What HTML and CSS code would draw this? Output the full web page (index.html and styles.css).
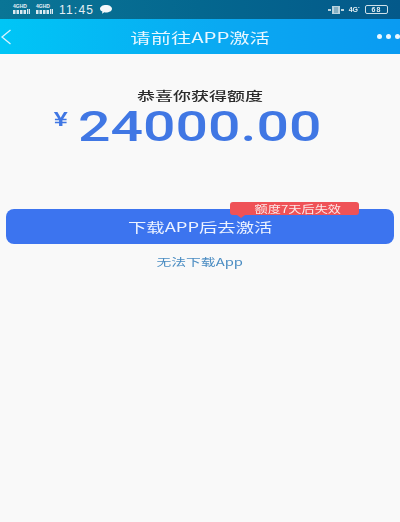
FILE: index.html
```html
<!DOCTYPE html>
<html lang="zh">
<head>
<meta charset="utf-8">
<title>请前往APP激活</title>
<link rel="stylesheet" href="styles.css">
</head>
<body>
<div class="page">
<div class="statusbar">
  <div class="status-left">
    <span class="sig"><span class="sig-t">4GHD</span><svg width="17" height="6" viewBox="0 0 17 6"><path d="M0 1h2.500v4H0zM3.500 1H6v4H3.500zM7 1h2.500v4H7zM10.500 1H13v4h-2.500zM14 0h1.200v5H14zM15.800 0H17v5h-1.200z" fill="#dbe9f0"/></svg></span>
    <span class="sig"><span class="sig-t">4GHD</span><svg width="17" height="6" viewBox="0 0 17 6"><path d="M0 1h2.500v4H0zM3.500 1H6v4H3.500zM7 1h2.500v4H7zM10.500 1H13v4h-2.500zM14 0h1.200v5H14zM15.800 0H17v5h-1.200z" fill="#dbe9f0"/></svg></span>
    <span class="time">11:45</span>
    <svg class="bubble" width="12" height="9" viewBox="0 0 12 9"><path d="M6 0c3.300 0 6 1.600 6 3.800S9.300 7.500 6 7.500c-.6 0-1.200 0-1.700-.2L2 8.800l.4-2.200C.9 6 0 5 0 3.800 0 1.600 2.700 0 6 0z" fill="#f4f8fa"/></svg>
  </div>
  <div class="status-right">
    <svg width="16" height="10" viewBox="0 0 16 10"><path d="M4 1h8v8H4zM0 4h3v2H0zM13 4h3v2h-3z" fill="#b9d2dd"/><path d="M6 3h4M6 5h4M6 7h4" stroke="#27708f" stroke-width=".7"/></svg>
    <span class="net">4G<sup>·</sup></span>
    <span class="batt">68</span>
  </div>
</div>
<header class="nav">
  <svg class="back" width="12" height="16" viewBox="0 0 12 16"><path d="M10.500 1 2 8l8.500 7" fill="none" stroke="#d8f3ff" stroke-width="1.300"/></svg>
  <h1 class="title"><span class="stretch-title">请前往APP激活</span></h1>
  <div class="dots"><i></i><i></i><i></i></div>
</header>
<main class="content">
  <p class="headline"><span class="stretch-head">恭喜你获得额度</span></p>
  <div class="amount">
    <span class="yen">¥</span>
    <span class="num">24000.00</span>
  </div>
  <div class="cta-wrap">
    <button class="cta"><span class="stretch-cta">下载APP后去激活</span></button>
    <div class="badge"><span class="stretch-badge">额度7天后失效</span></div>
  </div>
  <a class="link"><span class="stretch-link">无法下载App</span></a>
</main>
</div>
</body>
</html>
```
FILE: styles.css
```css
* { box-sizing: border-box; }
html, body { margin: 0; height: 100%; }
body {
  width: 400px;
  height: 522px;
  overflow: hidden;
  background: #f9f9f9;
  font-family: "Noto Sans CJK SC", "Liberation Sans", sans-serif;
}
.page { filter: blur(.35px); }
.statusbar {
  height: 19px;
  display: flex;
  justify-content: space-between;
  align-items: center;
  padding: 0 12px 0 13px;
  background: linear-gradient(90deg, #0a7596, #04678f 50%, #04598a);
  color: #e4eff4;
}
.status-left, .status-right { display: flex; align-items: center; }
.status-left { gap: 6px; }
.status-right { gap: 5px; }
.sig { display: flex; flex-direction: column; width: 17px; line-height: 5px; }
.sig-t { font: 700 5px/5px "Liberation Sans", sans-serif; white-space: nowrap; }
.time { font: 500 12px/14px "Liberation Sans", sans-serif; letter-spacing: 1.200px; }
.net { font: 700 7px/10px "Liberation Sans", sans-serif; }
.net sup { font-size: 6px; line-height: 0; }
.batt {
  width: 23px;
  height: 9px;
  border: 1px solid #cfe0e8;
  border-radius: 2px;
  font: 700 7px/7px "Liberation Sans", sans-serif;
  text-align: center;
  letter-spacing: 1px;
}
.nav {
  height: 35px;
  position: relative;
  display: flex;
  align-items: center;
  justify-content: center;
  background: linear-gradient(90deg, #00c6f6, #0aa9f2 55%, #0a9bf2);
}
.back { position: absolute; left: 0; top: 10px; }
.title { margin: 0; font-weight: 400; font-size: 14px; line-height: 20px; color: #e8f7ff; }
.stretch-title { display: inline-block; transform: scaleX(1.45); }
.dots { position: absolute; right: 0; top: 15px; display: flex; gap: 4px; }
.dots i { width: 5px; height: 5px; border-radius: 50%; background: #eaf8ff; }
.content { display: flex; flex-direction: column; align-items: center; }
.headline { margin: 33px 0 0; font-size: 12px; line-height: 17px; color: #2b2b2b; font-weight: 500; }
.stretch-head { display: inline-block; transform: scaleX(1.5); }
.amount { width: 100%; height: 44px; padding: 5px 0 0 55px; display: flex; align-items: flex-start; color: #4077e4; }
.yen { font: 700 21px/22px "Liberation Sans", sans-serif; margin-top: -1px; transform: scaleX(1.2); }
.num {
  font: 500 43px/34px Roboto, "Liberation Sans", sans-serif;
  margin-left: 11px;
  transform: scaleX(1.33);
  transform-origin: left center;
}
.cta-wrap { position: relative; width: 100%; padding: 0 6px; margin-top: 61px; }
.cta {
  display: block;
  width: 100%;
  height: 35px;
  border: 0;
  border-radius: 8px;
  background: #3c74ef;
  color: #edf3ff;
  font: 400 13px/18px "Noto Sans CJK SC", "Liberation Sans", sans-serif;
}
.stretch-cta { display: inline-block; transform: scaleX(1.41); }
.badge {
  position: absolute;
  left: 230px;
  top: -7px;
  width: 129px;
  height: 13px;
  border-radius: 3px;
  background: #ef5257;
  color: #fbeaea;
  font-size: 10px;
  line-height: 13px;
  text-align: center;
  padding-left: 6px;
}
.badge::after {
  content: "";
  position: absolute;
  left: 7px;
  bottom: -3px;
  border-style: solid;
  border-width: 3px 4px 0;
  border-color: #ef5257 transparent transparent;
}
.stretch-badge { display: inline-block; transform: scaleX(1.32); }
.link { margin-top: 9px; font-size: 10.500px; line-height: 17px; color: #4a8cc2; }
.stretch-link { display: inline-block; transform: scaleX(1.41); }
```
